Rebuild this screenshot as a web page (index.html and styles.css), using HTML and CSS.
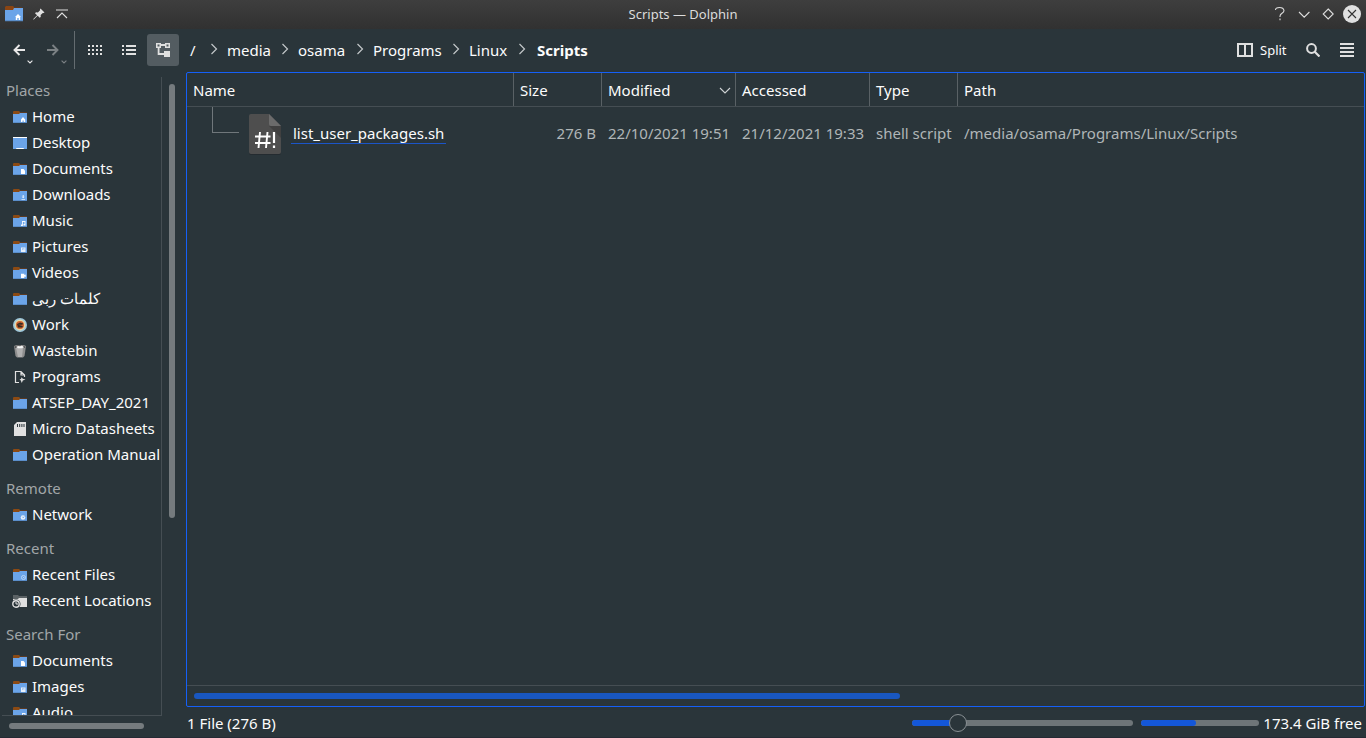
FILE: index.html
```html
<!DOCTYPE html>
<html lang="en">
<head>
<meta charset="utf-8">
<title>Scripts — Dolphin</title>
<link rel="stylesheet" href="styles.css">
</head>
<body>
<svg class="defs" width="0" height="0" aria-hidden="true">
  <symbol id="folder" viewBox="0 0 16 16">
    <path fill="#5b3a22" d="M1 3h14v3H1z"/>
    <path fill="#8b4a14" d="M1 3q0-1 1-1h5l1 1v2H1z"/>
    <path fill="#6ba4e8" d="M1 5h6l1-1h7v10H1z"/>
    <path fill="#4d78ac" d="M1 13.5h14v.5H1z"/>
  </symbol>
  <symbol id="chevron-right" viewBox="0 0 8 12"><path d="M1.5 1l5 5-5 5" fill="none" stroke="#c3c7c9" stroke-width="1.2"/></symbol>
  <symbol id="tiny-down" viewBox="0 0 6 4"><path d="M.6.6L3 3 5.400.6" fill="none" stroke="currentColor" stroke-width="1.1"/></symbol>
</svg>
<div class="window">
  <header class="titlebar">
    <div class="title-left">
      <svg class="app-icon" viewBox="0 0 18 16"><path fill="#5b3a22" d="M1 1h16v4H1z"/><path fill="#8b4513" d="M0 1l1-1h7l1 1v3H0z"/><path fill="#6ba4e8" d="M0 4h8l1-2h9v13H0z"/><path fill="#4d78ac" d="M0 14.500h18v.8H0z"/><path fill="#fff" d="M13 8l3 3h-.8v3h-1.500v-2h-1.400v2h-1.500v-3H10z"/></svg>
      <svg class="pin-icon" viewBox="0 0 12 12"><path fill="#e0e0e0" d="M7.500.5l4 4-1 .6-.7-.2L7.600 7l.2 1.800-1 1L4.600 7.700.8 11.500H.3V11l3.800-3.700L2 5.200l1-1 1.900.2L7.100 2.200 7 1.300z"/></svg>
      <svg class="shade-icon" viewBox="0 0 12 10"><path d="M0 1h12M1 9l5-5 5 5" fill="none" stroke="#e0e0e0" stroke-width="1.100"/></svg>
    </div>
    <div class="title">Scripts — Dolphin</div>
    <svg class="title-right" viewBox="0 0 90 20" fill="none" stroke="#dcdcdc" stroke-width="1.100">
      <path d="M3.500 6q0-2.500 4-2.500T12 6.500q0 1.500-2 2.800T8 12.300v.7M8 14.600v1.700"/>
      <path d="M27 8l5.200 5.200L37.400 8M56.200 5l5 5-5 5-5-5z"/>
      <circle cx="80" cy="10" r="9" fill="#e0e0e0" stroke="none"/><path d="M76 6l8 8M84 6l-8 8" stroke="#333"/>
    </svg>
  </header>
  <nav class="toolbar">
    <div class="nav-button"><svg class="arrow" viewBox="0 0 12 12"><path d="M6.500 1L1.500 6l5 5M2 6h10" fill="none" stroke="currentColor" stroke-width="1.900"/></svg><svg class="drop"><use href="#tiny-down"/></svg></div>
    <div class="nav-button disabled"><svg class="arrow" viewBox="0 0 12 12"><path d="M5.500 1l5 5-5 5M10 6H0" fill="none" stroke="currentColor" stroke-width="1.900"/></svg><svg class="drop"><use href="#tiny-down"/></svg></div>
    <div class="divider"></div>
    <div class="views">
      <div class="view-button"><svg class="view-icon" viewBox="0 0 16 16"><path d="M1 4h14M1 8h14M1 12h14" stroke="#e0e0e0" stroke-width="2" stroke-dasharray="2 2"/></svg></div>
      <div class="view-button"><svg class="view-icon" viewBox="0 0 16 16"><path d="M1 4h2M1 8h2M1 12h2M5 4h10M5 8h10M5 12h10" stroke="#e0e0e0" stroke-width="2"/></svg></div>
      <div class="view-button active"><svg class="view-icon" viewBox="0 0 16 16"><path fill="#e0e0e0" fill-rule="evenodd" d="M1 1h5v1h4V1h5v5h-5V4H6v2H4.500v5H9V9h6v6H9v-2H2.700V6H1zM2.500 2.500v2h2v-2zM11.500 2.500v2h2v-2z"/></svg></div>
    </div>
    <div class="breadcrumbs">
      <span class="crumb root">/</span><svg class="sep"><use href="#chevron-right"/></svg>
      <span class="crumb media">media</span><svg class="sep"><use href="#chevron-right"/></svg>
      <span class="crumb osama">osama</span><svg class="sep"><use href="#chevron-right"/></svg>
      <span class="crumb programs">Programs</span><svg class="sep"><use href="#chevron-right"/></svg>
      <span class="crumb linux">Linux</span><svg class="sep"><use href="#chevron-right"/></svg>
      <span class="crumb current">Scripts</span>
    </div>
    <div class="tools">
      <svg class="split-icon" viewBox="0 0 16 14"><path d="M1 1h14v12H1zM8 1v12" fill="none" stroke="#e0e0e0" stroke-width="2"/></svg>
      <span class="split-label">Split</span>
      <svg class="search-icon" viewBox="0 0 14 14"><circle cx="5.500" cy="5.500" r="4.400" fill="none" stroke="#e0e0e0" stroke-width="2"/><path d="M8.500 8.500l5 5" stroke="#e0e0e0" stroke-width="2.200"/></svg>
      <svg class="menu-icon" viewBox="0 0 14 14"><path d="M0 1h14M0 5h14M0 9h14M0 13h14" stroke="#e0e0e0" stroke-width="2"/></svg>
    </div>
  </nav>
  <main class="content">
    <aside class="sidebar">
      <div class="places">
        <h2 class="group first">Places</h2>
        <div class="place"><svg class="icon" viewBox="0 0 16 16"><use href="#folder"/><path fill="#fff" d="M11 8l2.200 2.500V13h-1.500v-1.500h-1.200V13H9v-2.500z"/></svg>Home</div>
        <div class="place"><svg class="icon" viewBox="0 0 16 16"><path fill="#6ba4e8" d="M1 2h14v12H1z"/><path fill="#fff" d="M1 2h14v1H1zM4.500 13h7l.5 1H4z"/></svg>Desktop</div>
        <div class="place"><svg class="icon" viewBox="0 0 16 16"><use href="#folder"/><path fill="#fff" d="M9 8h2.500L13 9.500V13H9z"/></svg>Documents</div>
        <div class="place"><svg class="icon" viewBox="0 0 16 16"><use href="#folder"/><path fill="#e8f0fa" d="M10.700 8h1v1.800h1L11.200 11.300 9.700 9.800h1zM9.500 12h3.500v.8H9.500z"/></svg>Downloads</div>
        <div class="place"><svg class="icon" viewBox="0 0 16 16"><use href="#folder"/><path fill="#f4f8fc" d="M10 8h3.500v4.500h-2V11h1V9h-1.600v4H9v-1.500h1z"/></svg>Music</div>
        <div class="place"><svg class="icon" viewBox="0 0 16 16"><use href="#folder"/><path fill="#e8f0fa" d="M9 8.500h4.500V13H9z"/><path fill="#9fc3ef" d="M10 9.300h2.500v1.500l-.8-.5-1.700 1z"/></svg>Pictures</div>
        <div class="place"><svg class="icon" viewBox="0 0 16 16"><use href="#folder"/><path fill="#fff" d="M9 8.700h3.300v1.300l1.400-.5v2.400l-1.400-.5V13H9z"/></svg>Videos</div>
        <div class="place"><svg class="icon"><use href="#folder"/></svg><span class="arabic" lang="ar" dir="rtl">كلمات ربى</span></div>
        <div class="place"><svg class="icon" viewBox="0 0 16 16"><circle cx="8" cy="8" r="7" fill="#9fc8dc"/><circle cx="8" cy="8" r="5.400" fill="#e6d9a4"/><circle cx="8" cy="8" r="4" fill="#d0642f"/><path fill="#372c22" d="M5 7l3-1.500 3 .8-.5 1.400H6l3 .8 2 .4-1 1.600H6z"/></svg>Work</div>
        <div class="place"><svg class="icon" viewBox="0 0 16 16"><path fill="#8e8e8e" d="M2 3l2.500-1h7L14 3l-1.500 10-1.500 1.500H5L3.500 13z"/><path fill="#b0b0b0" d="M4 5h7l-1 9H6z"/><path fill="#555" d="M2.500 3.500q5.500-2.500 11 0L13 5H3z"/><path fill="#f5f5f5" d="M4 4l2-1 2 .3 2-.8 2 1.700-2 1H6z"/></svg>Wastebin</div>
        <div class="place"><svg class="icon" viewBox="0 0 16 16"><path d="M7 13.500H3.500v-11H9L12.500 6v2M9 2.500V6h3.500" fill="none" stroke="#e0e0e0" stroke-width="1.200"/><path fill="#e0e0e0" d="M9.500 8.200l1.300 1.600 2.700.8-2.700.9-1 2.500-1-2.500-1.300-1 1.500-.6z"/></svg>Programs</div>
        <div class="place"><svg class="icon"><use href="#folder"/></svg>ATSEP_DAY_2021</div>
        <div class="place"><svg class="icon" viewBox="0 0 16 16"><path fill="#e0e0e0" d="M5 1h9v14H2V4z"/><path d="M5.500 3v3M7.700 3v3M9.900 3v3M12 3v3" stroke="#2a353a" stroke-width="1"/></svg>Micro Datasheets</div>
        <div class="place"><svg class="icon"><use href="#folder"/></svg>Operation Manual</div>
        <h2 class="group">Remote</h2>
        <div class="place"><svg class="icon" viewBox="0 0 16 16"><use href="#folder"/><circle cx="11" cy="10.500" r="2.300" fill="#e8f0fa"/><path d="M10.300 9.700l1 1.200 1-1.500" fill="none" stroke="#6ba4e8" stroke-width=".8"/></svg>Network</div>
        <h2 class="group">Recent</h2>
        <div class="place"><svg class="icon" viewBox="0 0 16 16"><use href="#folder"/><circle cx="11.500" cy="10.500" r="2" fill="none" stroke="#b9d4f4"/><path fill="#b9d4f4" d="M11 10h1.300v1H11z"/></svg>Recent Files</div>
        <div class="place"><svg class="icon" viewBox="0 0 16 16"><path fill="#5b6265" d="M1 2h5l1 1h8v4H1z"/><path fill="#e0e0e0" d="M1 6h5l1-1h8v9H1z"/><circle cx="4" cy="11" r="4.500" fill="#2a353a"/><circle cx="4" cy="11" r="3.200" fill="none" stroke="#e0e0e0" stroke-width="1.400"/><path d="M4 9v2h2" fill="none" stroke="#e0e0e0"/></svg>Recent Locations</div>
        <h2 class="group">Search For</h2>
        <div class="place"><svg class="icon" viewBox="0 0 16 16"><use href="#folder"/><path fill="#fff" d="M9 8h2.500L13 9.500V13H9z"/></svg>Documents</div>
        <div class="place"><svg class="icon" viewBox="0 0 16 16"><use href="#folder"/><path fill="#e8f0fa" d="M9 8.500h4.500V13H9z"/><path fill="#9fc3ef" d="M10 9.300h2.500v1.500l-.8-.5-1.700 1z"/></svg>Images</div>
        <div class="place"><svg class="icon" viewBox="0 0 16 16"><use href="#folder"/><path fill="#f4f8fc" d="M10 8h3.500v4.500h-2V11h1V9h-1.600v4H9v-1.500h1z"/></svg>Audio</div>
      </div>
      <div class="side-scroll"><div class="side-thumb"></div></div>
      <div class="bottom-thumb"></div>
    </aside>
    <section class="main">
      <div class="view">
        <div class="row head">
          <div class="cell">Name</div><div class="cell">Size</div>
          <div class="cell sorted">Modified<svg class="sort" viewBox="0 0 12 7"><path d="M1 1l5 5 5-5" fill="none" stroke="#d0d3d5" stroke-width="1.100"/></svg></div>
          <div class="cell">Accessed</div><div class="cell">Type</div><div class="cell">Path</div>
        </div>
        <div class="files">
          <div class="row file">
            <div class="name-cell">
              <div class="branch"></div>
              <svg class="file-icon" viewBox="0 0 32 42"><path fill="#242b30" d="M0 3h20l12 10v26q0 2-2 2H2q-2 0-2-2z"/><path fill="#4e4e4e" d="M2 0h18l12 12v26q0 2-2 2H2q-2 0-2-2V2q0-2 2-2z"/><path fill="#404040" d="M20 12h12v12z"/><path fill="#6b6b6b" d="M20 0l12 12H22q-2 0-2-2z"/><path d="M11 18L9.500 34M18.500 18L17 34M6 22.500h15.500M6 29h15.500" fill="none" stroke="#fff" stroke-width="1.900"/><path d="M25 18v11M25 31.500V34" stroke="#fff" stroke-width="2.200"/></svg>
              <span class="filename">list_user_packages.sh</span>
            </div>
            <div class="data size">276 B</div><div class="data">22/10/2021 19:51</div><div class="data">21/12/2021 19:33</div><div class="data">shell script</div><div class="data">/media/osama/Programs/Linux/Scripts</div>
          </div>
        </div>
        <div class="hscroll"><div class="hthumb"></div></div>
      </div>
      <footer class="status">
        <span class="count">1 File (276 B)</span>
        <div class="slider"><div class="slider-fill"></div><div class="knob"></div></div>
        <div class="disk"><div class="disk-fill"></div></div>
        <span class="free">173.4 GiB free</span>
      </footer>
    </section>
  </main>
</div>
</body>
</html>
```
FILE: styles.css
```css
* { box-sizing: border-box; }
html, body { margin: 0; height: 100%; overflow: hidden; }
body { background: #2a353a; color: #fcfcfc; font: 15px/20px "Noto Sans", sans-serif; white-space: nowrap; }
svg { display: block; flex: none; }
.defs { position: absolute; }
.window { width: 1366px; height: 738px; display: flex; flex-direction: column; border-bottom: 1px solid #252a34; }

.titlebar { height: 29px; flex: none; display: grid; grid-template-columns: 1fr auto 1fr; align-items: center; padding-bottom: 1px; background: linear-gradient(#3e3e3e, #313131); }
.title-left { display: flex; align-items: center; padding-left: 5px; }
.app-icon { width: 18px; height: 16px; }
.pin-icon { width: 12px; height: 12px; margin-left: 10px; }
.shade-icon { width: 12px; height: 10px; margin-left: 11px; }
.title { font-size: 13px; line-height: 26px; color: #dcdcdc; }
.title-right { width: 90px; height: 20px; justify-self: end; margin-right: 4px; }

.toolbar { height: 43px; flex: none; display: flex; align-items: flex-start; padding-top: 2px; }
.nav-button { width: 34px; height: 38px; padding: 13px 0 0 13px; color: #e8e8e8; }
.nav-button.disabled { color: #7b8184; }
.arrow { width: 12px; height: 12px; }
.drop { width: 6px; height: 4px; margin: 4px 0 0 14px; }
.divider { width: 1px; height: 38px; margin-left: 6px; background: #646c70; }
.views { display: flex; gap: 2px; padding: 3px 0 0 4px; }
.view-button { width: 32px; height: 32px; padding: 8px; border-radius: 3px; }
.view-button.active { background: #535c61; }
.view-icon { width: 16px; height: 16px; }
.breadcrumbs { display: flex; align-items: center; height: 38px; padding-left: 11px; }
.sep { width: 8px; height: 12px; margin-top: -2px; }
.crumb.root { width: 20px; }
.crumb.media, .crumb.osama, .crumb.programs, .crumb.linux { margin-left: 9px; }
.crumb.media { width: 54px; }
.crumb.osama { width: 58px; }
.crumb.programs { width: 79px; }
.crumb.linux { width: 49px; }
.crumb.current { margin-left: 11px; font-weight: 700; }
.tools { margin-left: auto; display: flex; align-items: center; height: 38px; padding-right: 12px; }
.split-icon { width: 16px; height: 14px; }
.split-label { margin-left: 7px; width: 46px; font-size: 13px; }
.search-icon { width: 14px; height: 14px; }
.menu-icon { width: 14px; height: 14px; margin-left: 20px; }

.content { flex: 1; min-height: 0; display: flex; }
.sidebar { width: 186px; padding: 5px 0 0 2px; display: grid; grid-template-columns: 160px 1fr; grid-template-rows: 639px 1fr; }
.places { overflow: hidden; border-right: 1px solid #454e53; border-bottom: 1px solid #454e53; }
.group { margin: 0; padding: 11px 0 0 4px; height: 34px; font: inherit; color: #a1a6a8; }
.group.first { height: 26px; padding-top: 3px; }
.place { height: 26px; padding-left: 10px; display: flex; align-items: center; gap: 4px; }
.icon { width: 16px; height: 16px; margin-top: 2px; }
.side-scroll { padding: 7px 0 0 7px; }
.side-thumb { width: 6px; height: 434px; border-radius: 3px; background: #757b7e; }
.bottom-thumb { width: 135px; height: 6px; margin: 7px 0 0 7px; border-radius: 3px; background: #757b7e; }

.main { width: 1179px; display: flex; flex-direction: column; }
.view { height: 635px; border: 1px solid #1560f8; border-radius: 2px; display: flex; flex-direction: column; }
.row { display: grid; grid-template-columns: 327px 88px 134px 134px 88px 1fr; }
.head { height: 34px; border-bottom: 1px solid #454e53; }
.cell { padding: 7px 6px 0; border-right: 1px solid #596165; }
.cell:last-child { border-right: 0; }
.cell.sorted { display: flex; justify-content: space-between; padding-right: 4px; }
.sort { width: 12px; height: 7px; margin-top: 7px; }
.files { flex: 1; }
.file { height: 52px; align-items: center; color: #b0b5b7; }
.data { padding-left: 6px; }
.data.size { padding: 0 6px 0 0; text-align: right; }
.name-cell { display: flex; align-self: start; padding-left: 25px; }
.branch { width: 27px; height: 26px; border-left: 1px solid #70777b; border-bottom: 1px solid #70777b; }
.file-icon { width: 32px; height: 42px; margin: 7px 0 0 10px; }
.filename { height: 21px; margin: 16px 0 0 10px; padding: 0 2px; line-height: 20px; border-bottom: 1px solid #1b55c8; color: #fcfcfc; }
.hscroll { height: 21px; padding: 7px; border-top: 1px solid #454e53; }
.hthumb { width: 706px; height: 6px; border-radius: 3px; background: #1957c0; }
.status { flex: 1; display: flex; align-items: center; padding: 2px 3px 0 1px; }
.slider { width: 221px; height: 6px; margin-left: auto; border-radius: 3px; background: #6e7578; position: relative; }
.slider-fill { width: 46px; height: 6px; border-radius: 3px; background: #1457d8; }
.knob { position: absolute; left: 37px; top: -6px; width: 18px; height: 18px; border: 1px solid #899094; border-radius: 50%; background: #2a353a; }
.disk { width: 118px; height: 6px; margin: 0 4px 0 8px; border-radius: 3px; background: #6e7578; }
.disk-fill { width: 55px; height: 6px; border-radius: 3px; background: #1457d8; }
```
